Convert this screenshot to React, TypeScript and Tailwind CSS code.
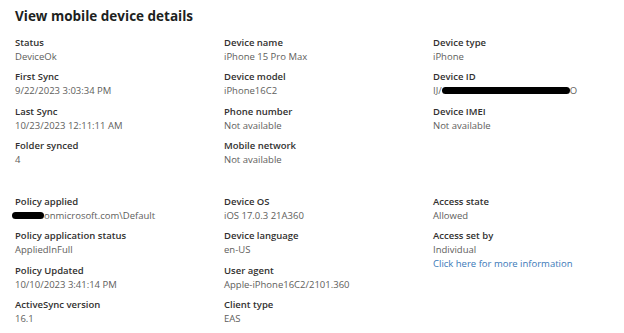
import React from "react";

type Field = { label: string; value: React.ReactNode; extra?: React.ReactNode };

const Blob = ({ w }: { w: string }) => (
    <span className={`inline-block ${w} h-[7px] bg-black rounded-full align-middle -translate-y-[1px]`} />
);

const col1: Field[][] = [
    [
        { label: "Status", value: "DeviceOk" },
        { label: "First Sync", value: "9/22/2023 3:03:34 PM" },
        { label: "Last Sync", value: "10/23/2023 12:11:11 AM" },
        { label: "Folder synced", value: "4" },
    ],
    [
        {
            label: "Policy applied",
            value: (
                <span className="-ml-[3px]">
                    <Blob w="w-[32px]" />
                    onmicrosoft.com\Default
                </span>
            ),
        },
        { label: "Policy application status", value: "AppliedInFull" },
        { label: "Policy Updated", value: "10/10/2023 3:41:14 PM" },
        { label: "ActiveSync version", value: "16.1" },
    ],
];

const col2: Field[][] = [
    [
        { label: "Device name", value: "iPhone 15 Pro Max" },
        { label: "Device model", value: "iPhone16C2" },
        { label: "Phone number", value: "Not available" },
        { label: "Mobile network", value: "Not available" },
    ],
    [
        { label: "Device OS", value: "iOS 17.0.3 21A360" },
        { label: "Device language", value: "en-US" },
        { label: "User agent", value: "Apple-iPhone16C2/2101.360" },
        { label: "Client type", value: "EAS" },
    ],
];

const col3: Field[][] = [
    [
        { label: "Device type", value: "iPhone" },
        {
            label: "Device ID",
            value: (
                <span>
                    IJ/
                    <Blob w="w-[128px]" />O
                </span>
            ),
        },
        { label: "Device IMEI", value: "Not available" },
    ],
    [
        { label: "Access state", value: "Allowed" },
        {
            label: "Access set by",
            value: "Individual",
            extra: <a className="block text-[#3a78b8] cursor-pointer">Click here for more information</a>,
        },
    ],
];

function Column({ groups }: { groups: Field[][] }) {
    return (
        <div className="flex flex-col gap-[22px]">
            {groups.map((g, gi) => (
                <div key={gi} className="flex flex-col h-[137px]">
                    {g.map((f, i) => (
                        <div key={i} className="h-[34.3px] shrink-0">
                            <div className="text-[#323130] font-semibold leading-[14px]">{f.label}</div>
                            <div className="text-[#605e5c] leading-[14px] whitespace-nowrap">{f.value}</div>
                            {f.extra && <div className="leading-[14px]">{f.extra}</div>}
                        </div>
                    ))}
                </div>
            ))}
        </div>
    );
}

export default function App() {
    return (
        <div className="w-[624px] h-[333px] bg-white overflow-hidden pl-[15px] pt-[5px] font-['Open_Sans',sans-serif]">
            <h1 className="text-[13.5px] font-bold text-[#201f1e] leading-[22px] mb-[9px]">View mobile device details</h1>
            <div className="grid grid-cols-[209px_209px_1fr] text-[9.5px]">
                <Column groups={col1} />
                <Column groups={col2} />
                <Column groups={col3} />
            </div>
        </div>
    );
}
